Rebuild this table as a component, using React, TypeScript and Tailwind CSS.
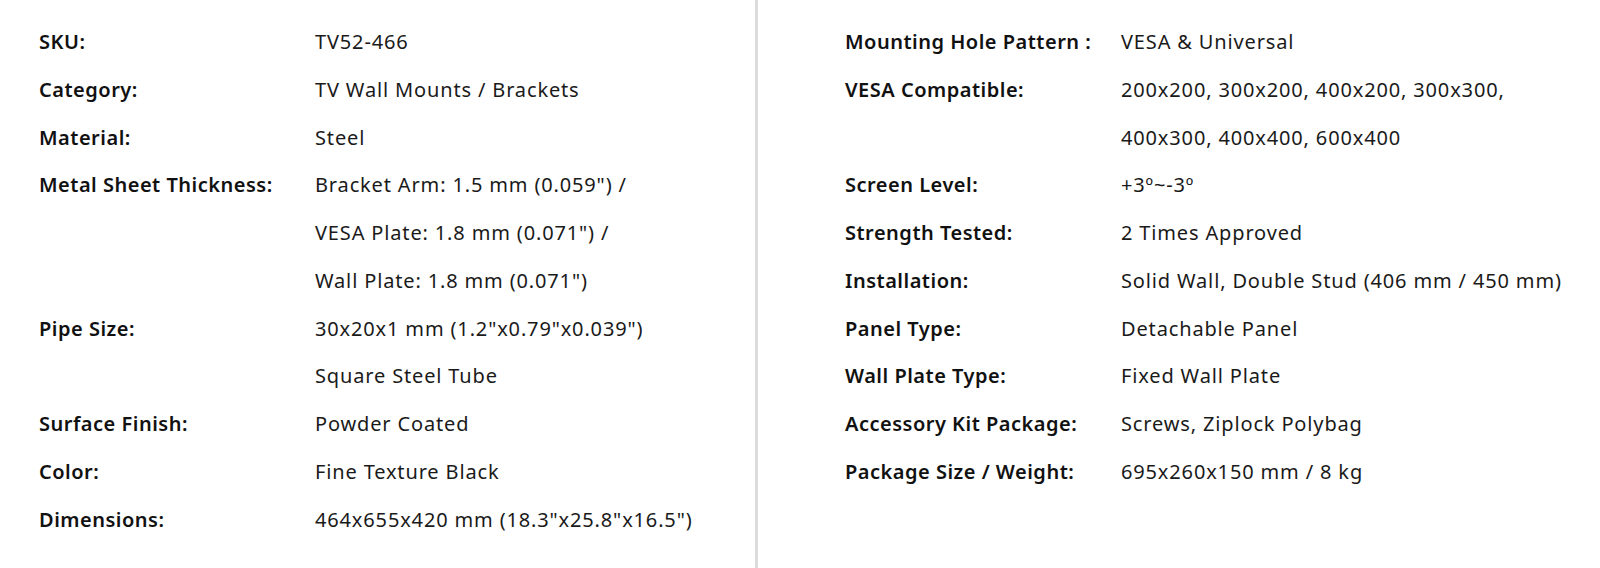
const left: [string, string[]][] = [
  ["SKU:", ["TV52-466"]],
  ["Category:", ["TV Wall Mounts / Brackets"]],
  ["Material:", ["Steel"]],
  [
    "Metal Sheet Thickness:",
    ['Bracket Arm: 1.5 mm (0.059") /', 'VESA Plate: 1.8 mm (0.071") /', 'Wall Plate: 1.8 mm (0.071")'],
  ],
  ["Pipe Size:", ['30x20x1 mm (1.2"x0.79"x0.039")', "Square Steel Tube"]],
  ["Surface Finish:", ["Powder Coated"]],
  ["Color:", ["Fine Texture Black"]],
  ["Dimensions:", ['464x655x420 mm (18.3"x25.8"x16.5")']],
];

const right: [string, string[]][] = [
  ["Mounting Hole Pattern :", ["VESA & Universal"]],
  ["VESA Compatible:", ["200x200, 300x200, 400x200, 300x300,", "400x300, 400x400, 600x400"]],
  ["Screen Level:", ["+3º~-3º"]],
  ["Strength Tested:", ["2 Times Approved"]],
  ["Installation:", ["Solid Wall, Double Stud (406 mm / 450 mm)"]],
  ["Panel Type:", ["Detachable Panel"]],
  ["Wall Plate Type:", ["Fixed Wall Plate"]],
  ["Accessory Kit Package:", ["Screws, Ziplock Polybag"]],
  ["Package Size / Weight:", ["695x260x150 mm / 8 kg"]],
];

function SpecTable({ rows }: { rows: [string, string[]][] }) {
  return (
    <div className="flex flex-col">
      {rows.map(([label, values]) => (
        <div key={label} className="flex">
          <div className="w-[276px] shrink-0 h-[47.76px] leading-[47.76px] font-semibold tracking-[0.5px] whitespace-nowrap text-[#111]">
            {label}
          </div>
          <div className="flex flex-col">
            {values.map((v) => (
              <div key={v} className="h-[47.76px] leading-[47.76px] tracking-[0.85px] whitespace-nowrap text-[#1a1a1a]">
                {v}
              </div>
            ))}
          </div>
        </div>
      ))}
    </div>
  );
}

export default function App() {
  return (
    <div
      className="flex h-[568px] w-[1600px] bg-white text-[20px]"
      style={{ fontFamily: '"Noto Sans", "Open Sans", sans-serif' }}
    >
      <div className="w-[755px] shrink-0 pl-[39px] pt-[18px]">
        <SpecTable rows={left} />
      </div>
      <div className="w-[3px] shrink-0 bg-[#dcdcdc]" />
      <div className="flex-1 pl-[87px] pt-[18px]">
        <SpecTable rows={right} />
      </div>
    </div>
  );
}
